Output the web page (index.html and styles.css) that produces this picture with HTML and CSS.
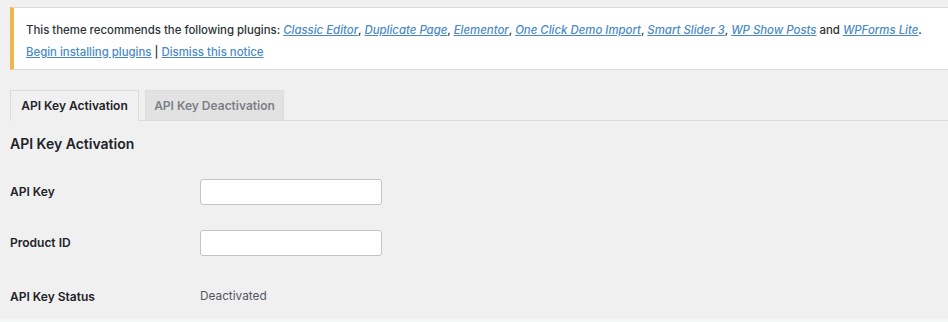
FILE: index.html
```html
<!DOCTYPE html>
<html lang="en">
<head>
  <meta charset="UTF-8">
  <title>API Key Activation</title>
  <link rel="stylesheet" href="styles.css">
</head>
<body>
  <div class="notice">
    <p>This theme recommends the following plugins:
      <a href="#" class="plugin">Classic Editor</a>,
      <a href="#" class="plugin">Duplicate Page</a>,
      <a href="#" class="plugin">Elementor</a>,
      <a href="#" class="plugin">One Click Demo Import</a>,
      <a href="#" class="plugin">Smart Slider 3</a>,
      <a href="#" class="plugin">WP Show Posts</a> and
      <a href="#" class="plugin">WPForms Lite</a>.</p>
    <p><a href="#">Begin installing plugins</a> | <a href="#">Dismiss this notice</a></p>
  </div>

  <div class="tabs">
    <a href="#" class="tab active">API Key Activation</a>
    <a href="#" class="tab">API Key Deactivation</a>
  </div>

  <h2>API Key Activation</h2>

  <table class="form-table">
    <tr>
      <th>API Key</th>
      <td><input type="text"></td>
    </tr>
    <tr>
      <th>Product ID</th>
      <td><input type="text"></td>
    </tr>
    <tr class="last">
      <th>API Key Status</th>
      <td class="status">Deactivated</td>
    </tr>
  </table>
  <div class="bottom"></div>
</body>
</html>
```

FILE: styles.css
```css
body {
  margin: 0;
  padding: 7px 0 0 10px;
  background-color: #f0f0f1;
  color: #2c3338;
  font-family: Inter, 'Liberation Sans', sans-serif;
  font-size: 11.4px;
  height: 322px;
  box-sizing: border-box;
  overflow: hidden;
}
a {
  color: #4a8ac4;
}
.notice {
  background-color: #fff;
  border: 1px solid #dcdcde;
  border-right: none;
  border-left: 4px solid #f0b54f;
  padding: 16px 12px 0;
  height: 45px;
}
.notice p {
  margin: 0 0 10px;
  line-height: 12px;
  font-weight: 500;
}
.notice a {
  font-weight: 500;
}
.plugin {
  font-style: italic;
}
.tabs {
  margin-top: 20px;
  display: flex;
  gap: 6px;
  border-bottom: 1px solid #dcdcde;
  height: 30px;
}
.tab {
  display: block;
  line-height: 30px;
  height: 30px;
  font-size: 12px;
  font-weight: 600;
  text-decoration: none;
  text-align: center;
  color: #7c8085;
  background-color: #e2e2e3;
  border: 1px solid #dcdcde;
  border-bottom: none;
  box-sizing: border-box;
  width: 139px;
}
.tab.active {
  background-color: #f0f0f1;
  color: #1d2327;
  height: 31px;
  margin-bottom: -1px;
  width: 129px;
}
h2 {
  margin: 14px 0 0;
  font-size: 14px;
  line-height: 17px;
  font-weight: 600;
  color: #1d2327;
}
.form-table {
  border-collapse: collapse;
  margin-top: 14px;
}
.form-table th {
  width: 190px;
  height: 51px;
  padding: 0;
  text-align: left;
  font-weight: 600;
  font-size: 12px;
  vertical-align: middle;
  color: #1d2327;
}
.form-table td {
  padding: 0;
  vertical-align: middle;
}
.form-table .last th {
  height: 56px;
}
.form-table input {
  display: block;
  width: 182px;
  height: 26px;
  box-sizing: border-box;
  border: 1px solid #c3c4c7;
  border-radius: 3px;
  background-color: #fff;
  margin: 0;
}
.status {
  color: #50575e;
  font-size: 11.8px;
}
.bottom {
  position: absolute;
  left: 0;
  right: 0;
  top: 319px;
  height: 3px;
  background-color: #f6f7f7;
}
```
